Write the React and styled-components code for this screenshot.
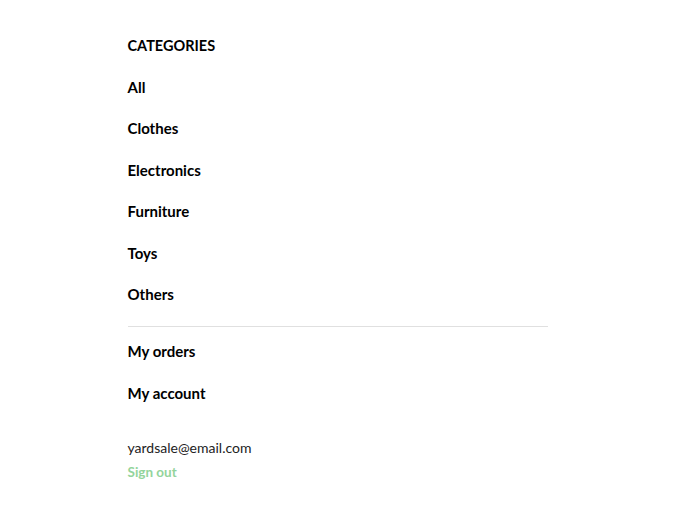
import React from 'react';
import styled, { createGlobalStyle } from 'styled-components';

const GlobalStyle = createGlobalStyle`
    * {
        box-sizing: border-box;
    }
    body {
        margin: 0;
        background: #FFFFFF;
        font-family: 'Lato', 'Noto Sans', sans-serif;
    }
`;

const categories = ["All", "Clothes", "Electronics", "Furniture", "Toys", "Others"];

export default function App(){
    return(
        <>
            <GlobalStyle />
            <Menu>
                <List>
                    <Title>CATEGORIES</Title>
                    {categories.map(item => <Item key={item}><a href="#">{item}</a></Item>)}
                </List>
                <List bordered>
                    <Item><a href="#">My orders</a></Item>
                    <Item><a href="#">My account</a></Item>
                </List>
                <Account>
                    <Email>yardsale@email.com</Email>
                    <SignOut href="#">Sign out</SignOut>
                </Account>
            </Menu>
        </>
    );
}

const Menu = styled.nav`
    width: 420px;
    margin: 0 auto;
    padding-top: 25px;
`;

const List = styled.ul`
    list-style: none;
    margin: 0;
    padding: 0 0 ${props => props.bordered ? "0" : "10px"};
    border-bottom: ${props => props.bordered ? "none" : "1px solid #E0E0E0"};
    margin-bottom: ${props => props.bordered ? "22px" : "4.5px"};
`;

const Item = styled.li`
    height: 41.5px;
    line-height: 41.5px;
    font-size: 15px;
    font-weight: 700;

    a {
        color: #000000;
        text-decoration: none;
    }
`;

const Title = styled(Item)`
    font-size: 14.5px;
`;

const Account = styled.div`
    display: flex;
    flex-direction: column;
`;

const Email = styled.p`
    margin: 0;
    font-size: 14px;
    line-height: 24px;
    color: #222222;
`;

const SignOut = styled.a`
    font-size: 13.5px;
    line-height: 24px;
    font-weight: 700;
    color: #93D49C;
    text-decoration: none;
`;
